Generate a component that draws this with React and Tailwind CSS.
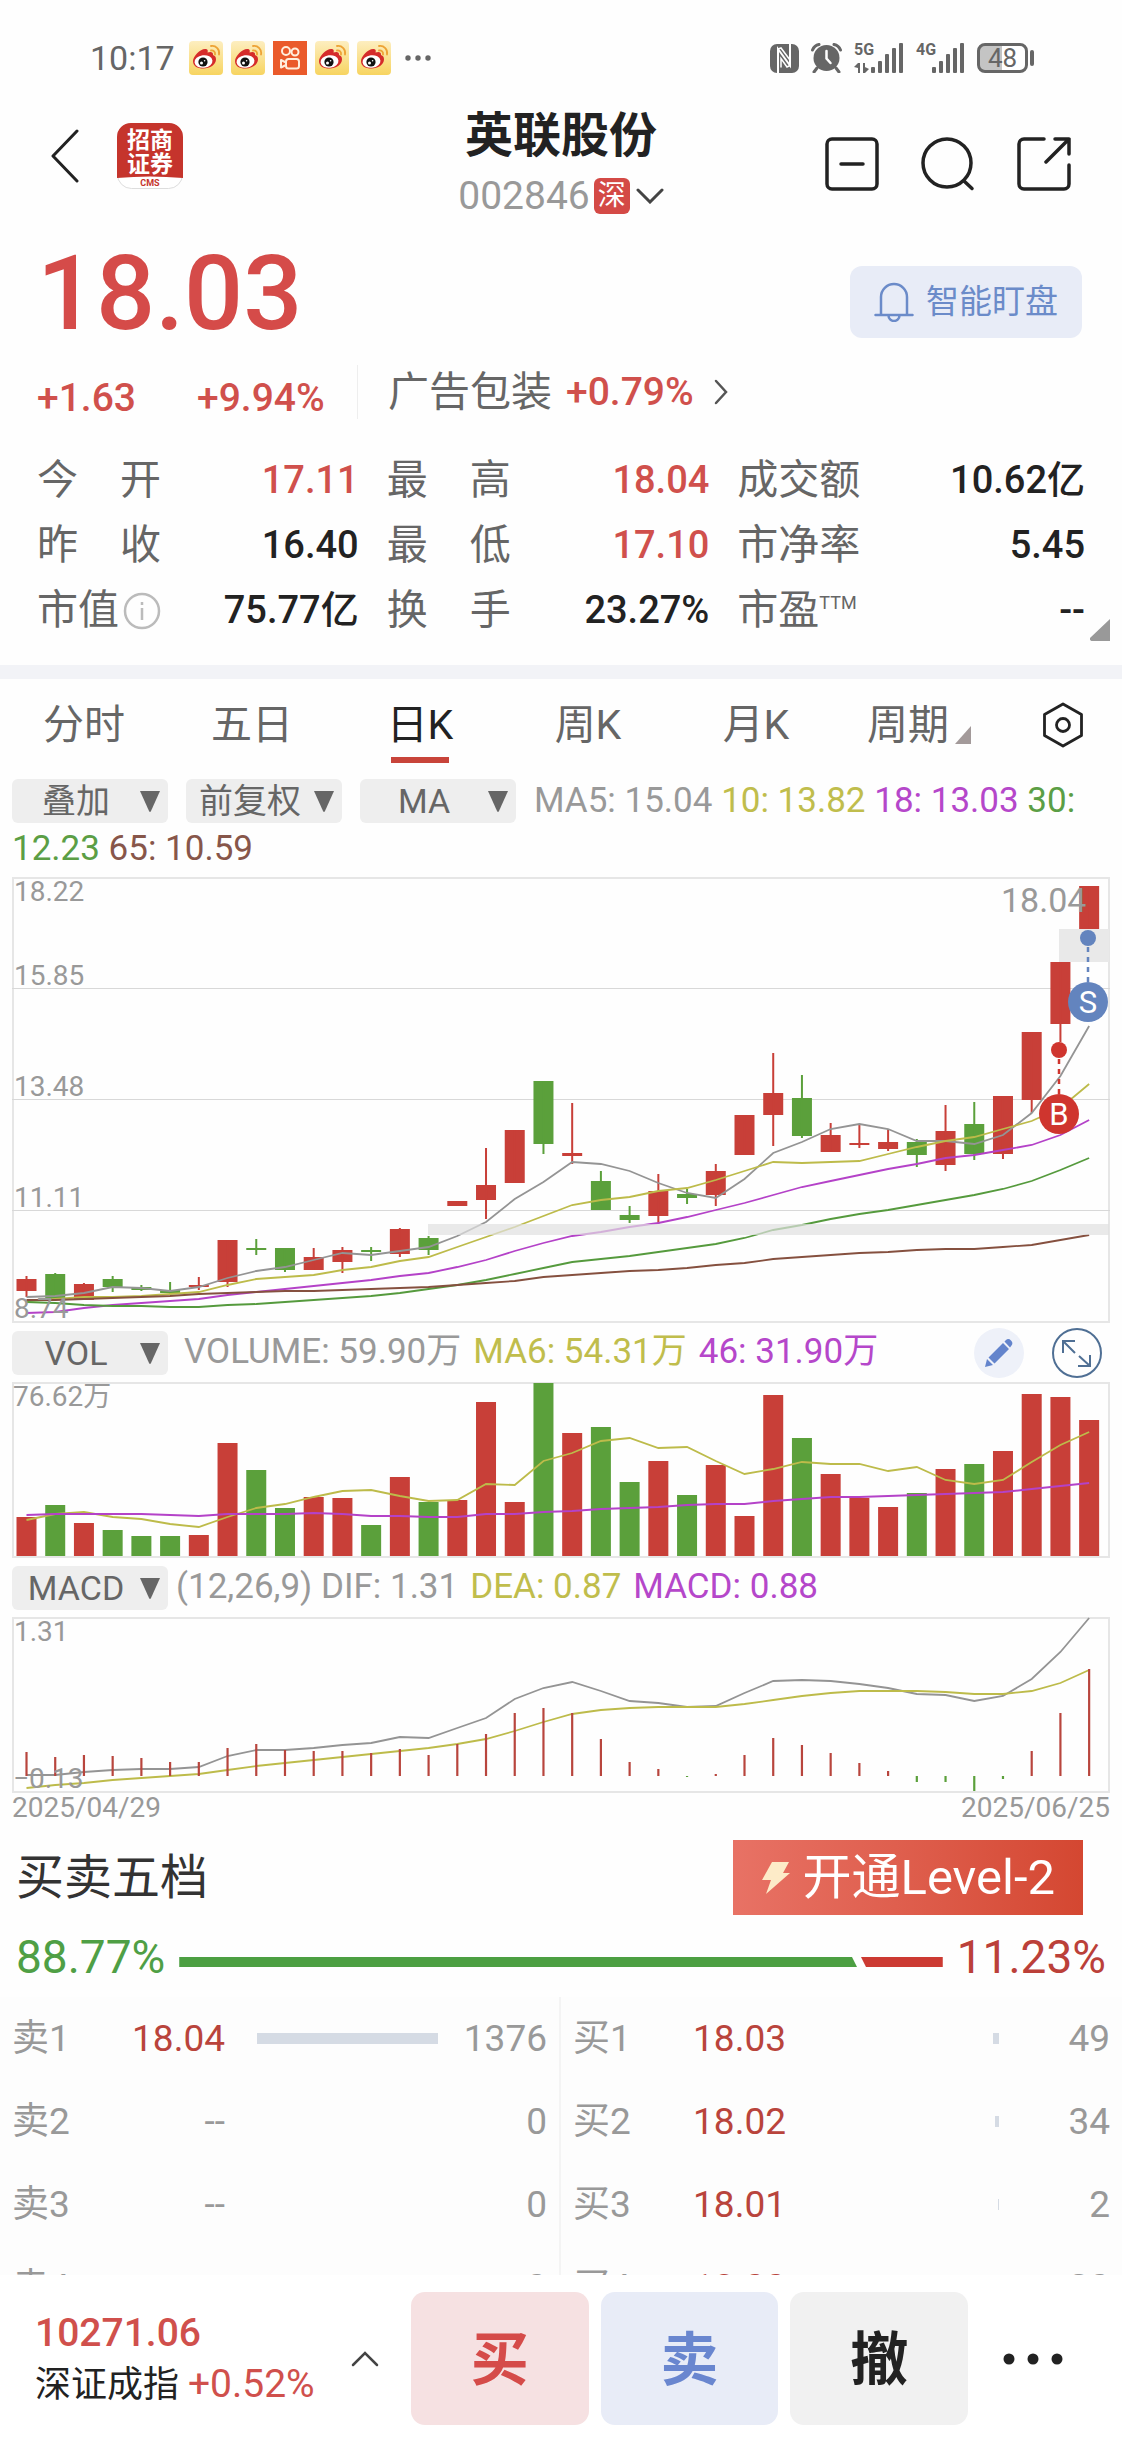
// src/App.jsx
import { useState } from 'react';

const RED = '#c83f38';
const GREEN = '#5ba03b';

// x of the n-th trading day, all three charts share it
const dayX = (i) => 14.5 + i * 28.72;
const toPoints = (ys) => ys.map((y, i) => `${dayX(i)},${y}`).join(' ');

// [up, body top, body bottom, high, low]
const CANDLES = [
  [1, 402, 414, 399, 420], [0, 397, 422, 396, 424], [1, 407, 423, 406, 423], [0, 402, 410, 399, 415],
  [0, 410, 413, 408, 414], [0, 413, 416, 405, 417], [1, 408, 410, 400, 413], [1, 363, 405, 363, 410],
  [0, 371, 373, 362, 378], [0, 371, 393, 371, 395], [1, 380, 393, 371, 393], [1, 373, 385, 370, 396],
  [0, 373, 375, 370, 384], [1, 352, 377, 351, 380], [0, 361, 373, 359, 378], [1, 324, 329, 324, 329],
  [1, 308, 323, 271, 342], [1, 253, 306, 253, 306], [0, 204, 267, 204, 277], [1, 276, 279, 226, 287],
  [0, 304, 333, 294, 333], [0, 338, 343, 329, 346], [1, 314, 339, 297, 347], [0, 317, 321, 312, 327],
  [1, 294, 318, 287, 329], [1, 238, 278, 238, 278], [1, 216, 238, 176, 269], [0, 221, 259, 198, 261],
  [1, 258, 275, 246, 275], [1, 266, 268, 247, 271], [1, 265, 272, 252, 274], [0, 265, 278, 262, 290],
  [1, 254, 288, 228, 294], [0, 247, 277, 225, 283], [1, 219, 277, 219, 282], [1, 155, 223, 155, 236],
  [1, 85, 147, 85, 165], [1, 9, 52, 9, 52],
];

const MA_LINES = [
  { color: '#949494', ys: [420, 419, 416, 410, 411, 414, 410, 401, 394, 390, 383, 376, 378, 374, 370, 359, 345, 322, 305, 285, 287, 294, 306, 316, 321, 302, 276, 265, 252, 247, 252, 264, 264, 267, 258, 236, 199, 149] },
  { color: '#bdbb4a', ys: [424, 422, 420, 420, 419, 417, 415, 408, 402, 400, 398, 393, 390, 384, 380, 370, 360, 350, 339, 328, 323, 320, 314, 311, 303, 294, 285, 286, 285, 284, 277, 270, 264, 260, 252, 244, 231, 207] },
  { color: '#b442c8', ys: [436, 435, 431, 428, 426, 424, 422, 418, 415, 412, 409, 406, 403, 399, 396, 390, 383, 374, 366, 359, 355, 350, 346, 340, 333, 326, 318, 310, 304, 298, 292, 287, 281, 278, 273, 268, 258, 243] },
  { color: '#559a3d', ys: [425, 426, 428, 429, 429, 430, 430, 428, 427, 425, 423, 421, 419, 416, 412, 408, 403, 397, 391, 385, 382, 379, 375, 371, 367, 361, 353, 348, 342, 337, 333, 328, 323, 318, 312, 304, 293, 281] },
  { color: '#85503f', ys: [423, 423, 422, 421, 420, 419, 417, 416, 415, 414, 414, 413, 412, 411, 410, 408, 406, 404, 400, 398, 396, 394, 393, 391, 388, 386, 382, 380, 378, 376, 375, 373, 372, 372, 370, 368, 363, 358] },
];

const VOLUMES = [135, 123, 141, 148, 154, 154, 153, 61, 88, 126, 115, 116, 143, 95, 120, 118, 20, 120, 1, 51, 45, 100, 79, 113, 83, 134, 13, 56, 92, 116, 125, 111, 87, 82, 69, 12, 15, 38];
const VOL_MA6 = [138, 132, 130, 135, 137, 142, 145, 135, 126, 122, 115, 109, 108, 114, 119, 118, 102, 103, 79, 71, 59, 56, 66, 65, 79, 92, 87, 80, 82, 82, 89, 85, 98, 102, 98, 80, 63, 50];
const VOL_MA46 = [133, 132, 132, 132, 132, 133, 134, 132, 132, 132, 131, 132, 134, 134, 135, 135, 132, 132, 130, 129, 127, 126, 125, 123, 122, 122, 119, 117, 115, 115, 114, 113, 112, 111, 110, 107, 104, 101];

const HIST = [135, 140, 138, 139, 141, 145, 145, 131, 127, 133, 134, 134, 136, 132, 138, 127, 117, 96, 91, 96, 122, 145, 152, 160, 157, 138, 121, 128, 136, 146, 154, 165, 165, 174, 162, 134, 96, 52];
const DIF = [158, 158, 155, 153, 152, 152, 150, 139, 133, 133, 131, 128, 126, 120, 121, 111, 101, 82, 71, 65, 74, 84, 86, 90, 89, 76, 64, 63, 64, 67, 71, 77, 78, 84, 79, 62, 35, 1];
const DEA = [171, 168, 166, 163, 161, 159, 157, 153, 149, 146, 143, 140, 137, 134, 131, 127, 122, 114, 105, 97, 93, 91, 90, 90, 90, 87, 83, 79, 76, 74, 74, 74, 75, 77, 77, 74, 66, 53];

const STATS = [
  { label: '今开', value: '17.11', up: true },
  { label: '最高', value: '18.04', up: true },
  { label: '成交额', value: '10.62亿' },
  { label: '昨收', value: '16.40' },
  { label: '最低', value: '17.10', up: true },
  { label: '市净率', value: '5.45' },
  { label: '市值', value: '75.77亿', info: true },
  { label: '换手', value: '23.27%' },
  { label: '市盈', sup: 'TTM', value: '--' },
];

const TABS = ['分时', '五日', '日K', '周K', '月K', '周期'];

// bar: width in px of the size bar
const ASKS = [
  { name: '卖1', price: '18.04', qty: '1376', bar: 181 },
  { name: '卖2', price: '--', qty: '0', bar: 0 },
  { name: '卖3', price: '--', qty: '0', bar: 0 },
  { name: '卖4', price: '--', qty: '0', bar: 0 },
];
const BIDS = [
  { name: '买1', price: '18.03', qty: '49', bar: 6 },
  { name: '买2', price: '18.02', qty: '34', bar: 4 },
  { name: '买3', price: '18.01', qty: '2', bar: 1 },
  { name: '买4', price: '18.00', qty: '20', bar: 0 },
];

function WeiboIcon() {
  return (
    <svg viewBox="0 0 34 34" className="size-[34px]" aria-hidden="true">
      <defs>
        <linearGradient id="weibo-bg" x1="0" y1="0" x2="0" y2="1">
          <stop offset="0" stopColor="#fdeec0" />
          <stop offset="1" stopColor="#f7d460" />
        </linearGradient>
      </defs>
      <rect width="34" height="34" rx="4" fill="url(#weibo-bg)" />
      <path d="M4 20c0-5 8-13 13-12 2 .4 2 2 1.500 3.500 3-1.200 6-.8 5.500 2.500 2 .8 3 2 3 4.500 0 5-6 9-12.500 9S4 25 4 20z" fill="#d52b2a" />
      <ellipse cx="14.500" cy="20.500" rx="9" ry="6.300" fill="#fff" transform="rotate(-7 14.500 20.500)" />
      <circle cx="14" cy="21" r="4.600" fill="#111" />
      <circle cx="12.500" cy="22" r="1.500" fill="#fff" />
      <circle cx="15.600" cy="19.800" r=".8" fill="#fff" />
      <path d="M22 9.500c2.500-.4 4.500 1.500 4 4M22 5c5-.8 9 3.500 8 8.500" fill="none" stroke="#eda336" strokeWidth="1.800" strokeLinecap="round" />
    </svg>
  );
}

function KuaishouIcon() {
  return (
    <svg viewBox="0 0 34 34" className="size-[34px]" fill="none" stroke="#ffeedd" strokeWidth="2" aria-hidden="true">
      <rect width="34" height="34" fill="#ea5a2b" stroke="none" />
      <circle cx="13" cy="10" r="4" />
      <circle cx="22" cy="11" r="3.500" />
      <rect x="13" y="18" width="13" height="9.500" rx="2.500" />
      <path d="M13 21.500l-5-2.500v7.500l5-2.500" strokeLinejoin="round" />
    </svg>
  );
}

function SignalIcon() {
  return (
    <svg viewBox="0 0 33 32" className="h-8 w-[33px]" fill="#666" aria-hidden="true">
      <rect x="0" y="25" width="4" height="6" rx="1" />
      <rect x="7" y="19" width="4" height="12" rx="1" />
      <rect x="14" y="12" width="4" height="19" rx="1" />
      <rect x="21" y="6" width="4" height="25" rx="1" />
      <rect x="28" y="1" width="4" height="30" rx="1" />
    </svg>
  );
}

function StatusBar() {
  return (
    <div className="flex h-9 items-center justify-between pr-[88px] pl-[90px] text-[34px] leading-9 text-[#666]">
      <div className="flex items-center gap-2">
        <span className="mr-1.5">10:17</span>
        <WeiboIcon />
        <WeiboIcon />
        <KuaishouIcon />
        <WeiboIcon />
        <WeiboIcon />
        <svg viewBox="0 0 26 6" className="ml-1.5 h-1.5 w-[26px]" fill="#666" aria-hidden="true">
          <circle cx="3" cy="3" r="2.700" />
          <circle cx="13" cy="3" r="2.700" />
          <circle cx="23" cy="3" r="2.700" />
        </svg>
      </div>

      <div className="flex items-center gap-3">
        {/* NFC */}
        <svg viewBox="0 0 29 29" className="size-[29px]" aria-hidden="true">
          <rect width="29" height="29" rx="7" fill="#666" />
          <path d="M8 29V5l12 16.500V0" fill="none" stroke="#fff" strokeWidth="2" />
          <path d="M8 5l3-1 9 12M20 21.500l-3 1.500-6-8.500v9" fill="none" stroke="#fff" strokeWidth="1.500" />
        </svg>
        {/* alarm */}
        <svg viewBox="0 0 31 30" className="h-[30px] w-[31px]" aria-hidden="true">
          <circle cx="15.500" cy="15" r="13" fill="#666" />
          <path d="M1.500 7A9 9 0 0 1 8 1.500M29.500 7A9 9 0 0 0 23 1.500M6 25l-3 4M25 25l3 4" stroke="#666" strokeWidth="3" strokeLinecap="round" fill="none" />
          <path d="M15.500 8v7.500l4 4.500" stroke="#fff" strokeWidth="2.500" strokeLinecap="round" fill="none" />
        </svg>
        <div className="flex">
          <div className="flex w-[17px] flex-col text-[16px] leading-4 font-bold">
            <span>5G</span>
            <svg viewBox="0 0 15 12" className="mt-1 h-3 w-[15px]" fill="#666" aria-hidden="true">
              <path d="M4 1h2v10H4zM0 5l4-4v5zM9 1h2v10H9zM11 5l4 2-4 4z" />
            </svg>
          </div>
          <SignalIcon />
        </div>
        <div className="flex">
          <span className="w-4 text-[16px] leading-4 font-bold">4G</span>
          <SignalIcon />
        </div>
        <div className="flex items-center gap-0.5">
          <span className="flex h-[30px] w-[51px] items-center justify-center rounded-lg border-3 border-[#666] bg-linear-to-r from-[#c4c4c4] from-48% to-white to-48% text-[26px] leading-6">
            48
          </span>
          <span className="h-4 w-1 rounded-sm bg-[#666]" />
        </div>
      </div>
    </div>
  );
}

function BrokerLogo() {
  return (
    <svg viewBox="0 0 66 66" className="size-[66px]" role="img" aria-label="招商证券">
      <rect x=".5" y=".5" width="65" height="65" rx="14" fill="#fff" stroke="#ddd" />
      <path d="M0 55V14A14 14 0 0 1 14 0h38a14 14 0 0 1 14 14v41q-33-3-66 0z" fill="#c5342c" />
      <g textAnchor="middle" fontWeight="700">
        <g fill="#fff" fontSize="23">
          <text x="33" y="25">招商</text>
          <text x="33" y="49">证券</text>
        </g>
        <text x="33" y="63" fill="#c5342c" fontSize="9">CMS</text>
      </g>
    </svg>
  );
}

function Header() {
  return (
    <header className="mt-[34px] grid grid-cols-[1fr_auto_1fr] items-center">
      <div className="flex items-center gap-[38px] pb-3 pl-[51px]">
        <button type="button" aria-label="返回">
          <svg viewBox="0 0 28 54" className="h-[54px] w-7" fill="none" stroke="#222" strokeWidth="3" strokeLinecap="round" strokeLinejoin="round">
            <path d="M26 2L2 27l24 25" />
          </svg>
        </button>
        <BrokerLogo />
      </div>

      <div className="flex flex-col items-center gap-4">
        <h1 className="text-[48px] leading-[52px] font-bold text-[#222]">英联股份</h1>
        <button type="button" className="flex items-center text-[39px] leading-9 text-[#999]">
          002846
          <span className="ml-1 flex size-9 items-center justify-center rounded-md bg-[#d44a46] text-[28px] leading-9 text-white">深</span>
          <svg viewBox="0 0 28 16" className="ml-1.5 h-4 w-7" fill="none" stroke="#444" strokeWidth="3" strokeLinecap="round">
            <path d="M2 2l12 12L26 2" />
          </svg>
        </button>
      </div>

      <div className="flex justify-end gap-[42px] pt-1 pr-[51px]">
        <button type="button" aria-label="移除自选">
          <svg viewBox="0 0 54 54" className="size-[54px]" fill="none" stroke="#222" strokeWidth="3.500" strokeLinecap="round">
            <rect x="2" y="2" width="50" height="50" rx="5" />
            <path d="M16 27h22" />
          </svg>
        </button>
        <button type="button" aria-label="搜索">
          <svg viewBox="0 0 54 54" className="size-[54px]" fill="none" stroke="#222" strokeWidth="3.500" strokeLinecap="round">
            <circle cx="26" cy="26" r="24" />
            <path d="M43 44l8 7.500" />
          </svg>
        </button>
        <button type="button" aria-label="分享">
          <svg viewBox="0 0 54 54" className="size-[54px]" fill="none" stroke="#222" strokeWidth="3.500" strokeLinecap="round" strokeLinejoin="round">
            <path d="M27 2H7a5 5 0 0 0-5 5v40a5 5 0 0 0 5 5h40a5 5 0 0 0 5-5V28" />
            <path d="M38 2h14v15M52 2L29 25" />
          </svg>
        </button>
      </div>
    </header>
  );
}

function PriceSummary() {
  return (
    <section>
      <div className="mt-9 flex items-end justify-between pr-10 pl-[37px]">
        <span className="text-[104px] leading-[88px] font-medium text-[#d54b49]">18.03</span>
        <button type="button" className="flex h-[72px] items-center rounded-xl bg-[#e8ecf7] px-6 text-[33px] text-[#6b8bc9]">
          <svg viewBox="0 0 40 40" className="mr-3 size-10" fill="none" stroke="#6b8bc9" strokeWidth="2.500" strokeLinecap="round">
            <path d="M7 33V15a13 13 0 0 1 26 0v18M1.500 33h37M14.500 33.500a5.500 5.500 0 0 0 11 0" />
          </svg>
          智能盯盘
        </button>
      </div>

      <div className="mt-[27px] flex h-[54px] items-center text-[39px] leading-[54px] font-medium text-[#d0504c]">
        <div className="flex w-[357px] pt-3 pl-[37px]">
          <span className="w-40">+1.63</span>
          <span>+9.94%</span>
        </div>
        <a href="#sector" className="flex items-center border-l border-[#eee] pl-[30px]">
          <span className="mr-3.5 text-[41px] font-normal text-[#666]">广告包装</span>
          +0.79%
          <svg viewBox="0 0 14 26" className="ml-5 h-[26px] w-3.5" fill="none" stroke="#555" strokeWidth="2.500" strokeLinecap="round">
            <path d="M2 2l10 11L2 24" />
          </svg>
        </a>
      </div>

      <dl className="mt-[29px] grid grid-cols-[322fr_323fr_348fr] gap-x-7 px-[37px]">
        {STATS.map((s) => (
          <div key={s.label} className="flex h-[65px] items-center justify-between leading-[65px]">
            <dt className="flex min-w-[124px] justify-between text-[41px] text-[#666]">
              {s.label.length === 2 && !s.info && !s.sup
                ? [...s.label].map((ch) => <span key={ch}>{ch}</span>)
                : <span>{s.label}</span>}
              {s.info && (
                <svg viewBox="0 0 38 38" className="mt-[14px] size-[38px]" fill="none" stroke="#bbb" strokeWidth="2.500">
                  <circle cx="19" cy="19" r="17" />
                  <path d="M19 16v12M19 10v3" />
                </svg>
              )}
              {s.sup && <span className="-mt-2 grow text-[18px]">{s.sup}</span>}
            </dt>
            <dd className={`text-[38px] font-medium ${s.up ? 'text-[#d0504c]' : 'text-[#222]'}`}>{s.value}</dd>
          </div>
        ))}
      </dl>
      <div className="flex h-[22px] justify-end pr-3">
        <svg viewBox="0 0 20 22" className="-mt-6 h-[22px] w-5" fill="#999" aria-hidden="true">
          <path d="M20 0v22H2a2 2 0 0 1-1.500-3.500z" />
        </svg>
      </div>
    </section>
  );
}

function PeriodTabs() {
  const [active, setActive] = useState('日K');

  return (
    <nav className="flex h-[92px] text-[41px] text-[#666]">
      {TABS.map((tab) => (
        <button key={tab} type="button" onClick={() => setActive(tab)} className="flex flex-[168] flex-col items-center pt-3.5 leading-[64px]">
          <span className={`flex items-center ${tab === active ? 'text-[#222]' : ''}`}>
            {tab}
            {tab === '周期' && (
              <svg viewBox="0 0 16 18" className="mt-5 mr-2.5 ml-1.5 h-[18px] w-4" fill="#a39a9a">
                <path d="M16 0v18H0z" />
              </svg>
            )}
          </span>
          {tab === active && <span className="h-1.5 w-[58px] bg-[#c8443a]" />}
        </button>
      ))}
      <button type="button" aria-label="设置" className="flex flex-[114] items-center">
        <svg viewBox="0 0 42 46" className="ml-[34px] h-[46px] w-[42px]" fill="none" stroke="#222" strokeWidth="2.800" strokeLinejoin="round">
          <path d="M21 2l18.500 10.500v21L21 44 2.500 33.500v-21z" />
          <circle cx="21" cy="23" r="6.500" />
        </svg>
      </button>
    </nav>
  );
}

function IndicatorSelect({ label, value }) {
  return (
    <span className="relative my-0.5 inline-block h-11 w-[156px] align-top">
      <select aria-label={label} className="block h-11 w-full appearance-none rounded-md bg-[#eee] pr-7 text-center text-[34px] leading-11 text-[#666]">
        <option>{value}</option>
      </select>
      <svg viewBox="0 0 20 21" className="pointer-events-none absolute top-3 right-2 h-[21px] w-5" fill="#666" aria-hidden="true">
        <path d="M0 0h20L11 20q-1 2-2 0z" />
      </svg>
    </span>
  );
}

function CandleChart() {
  return (
    <svg viewBox="0 0 1098 446" className="block w-full overflow-visible" role="img" aria-label="日K线">
      <rect x="1" y="1" width="1096" height="444" fill="none" stroke="#e6e6e6" strokeWidth="2" />
      {[111.5, 222.5, 333.5].map((y) => (
        <line key={y} x1="0" x2="1098" y1={y} y2={y} stroke="#d8d8d8" />
      ))}
      {CANDLES.map(([up, top, bottom, high, low], i) => (
        <g key={i} fill={up ? RED : GREEN}>
          <rect x={dayX(i) - 10} y={top} width="20" height={bottom - top} />
          <rect x={dayX(i) - 1} y={high} width="2" height={low - high} />
        </g>
      ))}
      {MA_LINES.map((line) => (
        <polyline key={line.color} points={toPoints(line.ys)} fill="none" stroke={line.color} strokeWidth="1.800" />
      ))}

      {/* open price gaps */}
      <rect x="416" y="347" width="681" height="11" fill="#dfdfdf" opacity=".7" />
      <path d="M1047 52h50v33h-50z" fill="#e9e9e9" />

      <g fill="#999" fontSize="28">
        <text x="2" y="24">18.22</text>
        <text x="2" y="108">15.85</text>
        <text x="2" y="219">13.48</text>
        <text x="2" y="330">11.11</text>
        <text x="2" y="441">8.74</text>
        <text x="989" y="35" fontSize="34">18.04</text>
      </g>

      {/* trade marks */}
      <g fill="#cf352e">
        <circle cx="1047" cy="173" r="8" />
        <line x1="1047" x2="1047" y1="182" y2="217" stroke="#cf352e" strokeWidth="2.500" strokeDasharray="5 5" />
        <circle cx="1047" cy="237" r="20" />
      </g>
      <g fill="#6384be">
        <circle cx="1076" cy="61" r="8" />
        <line x1="1076" x2="1076" y1="70" y2="106" stroke="#6384be" strokeWidth="2.500" strokeDasharray="5 5" />
        <circle cx="1076" cy="125" r="20" />
      </g>
      <g fill="#fff" fontSize="31" textAnchor="middle">
        <text x="1047" y="248">B</text>
        <text x="1076" y="136">S</text>
      </g>
    </svg>
  );
}

function VolumeChart() {
  return (
    <svg viewBox="0 0 1098 176" className="block w-full overflow-visible" role="img" aria-label="成交量">
      <rect x="1" y="1" width="1096" height="174" fill="none" stroke="#e6e6e6" strokeWidth="2" />
      {VOLUMES.map((y, i) => (
        <rect key={i} x={dayX(i) - 10} y={y} width="20" height={174 - y} fill={CANDLES[i][0] ? RED : GREEN} />
      ))}
      <polyline points={toPoints(VOL_MA6)} fill="none" stroke="#bdbb4a" strokeWidth="1.800" />
      <polyline points={toPoints(VOL_MA46)} fill="none" stroke="#b442c8" strokeWidth="2" />
      <text x="1" y="24" fill="#999" fontSize="28">76.62万</text>
    </svg>
  );
}

function MacdChart() {
  return (
    <svg viewBox="0 0 1098 176" className="block w-full overflow-visible" role="img" aria-label="MACD">
      <rect x="1" y="1" width="1096" height="174" fill="none" stroke="#e6e6e6" strokeWidth="2" />
      <polyline points={toPoints(DIF)} fill="none" stroke="#949494" strokeWidth="1.800" />
      <polyline points={toPoints(DEA)} fill="none" stroke="#bdbb4a" strokeWidth="1.800" />
      {HIST.map((y, i) => (
        <line key={i} x1={dayX(i)} x2={dayX(i)} y1="159" y2={y} stroke={y > 159 ? GREEN : '#b8453d'} strokeWidth="2.200" />
      ))}
      <g fill="#999" fontSize="28">
        <text x="2" y="24">1.31</text>
        <text x="1" y="171">−0.13</text>
      </g>
    </svg>
  );
}

function ChartPanel() {
  return (
    <section className="px-3 pt-1.5">
      <p className="pb-1 text-[35px] leading-[48px]">
        <span className="mr-[18px] inline-flex gap-[18px] align-top">
          <IndicatorSelect label="叠加" value="叠加" />
          <IndicatorSelect label="复权" value="前复权" />
          <IndicatorSelect label="主图指标" value="MA" />
        </span>
        <span className="text-[#999]">MA5: 15.04</span>{' '}
        <span className="text-[#c0bd4c]">10: 13.82</span>{' '}
        <span className="text-[#b547ca]">18: 13.03</span>{' '}
        <span className="text-[#5b9e45]">30: 12.23</span>{' '}
        <span className="text-[#87564a]">65: 10.59</span>
      </p>
      <CandleChart />

      <div className="flex h-[59px] items-center pr-2 text-[35px]">
        <IndicatorSelect label="副图指标一" value="VOL" />
        <p className="ml-4 flex grow gap-3">
          <span className="text-[#999]">VOLUME: 59.90万</span>
          <span className="text-[#c0bd4c]">MA6: 54.31万</span>
          <span className="text-[#b547ca]">46: 31.90万</span>
        </p>
        <button type="button" aria-label="画线" className="mr-7 flex size-[50px] items-center justify-center rounded-full bg-[#eef1f9]">
          <svg viewBox="0 0 30 30" className="size-[30px]" fill="#6384cc">
            <path d="M1 29l2-8 6 6zM4.500 19.500L19 5l6 6L10.500 25.500zM20.500 3.500l1.500-1.500q2.500-2 5 .5t.5 5L26 9.500z" />
          </svg>
        </button>
        <button type="button" aria-label="全屏">
          <svg viewBox="0 0 50 50" className="size-[50px]" fill="none" stroke="#4f6f94" strokeWidth="2">
            <circle cx="25" cy="25" r="24" />
            <path d="M23 13H11v12M11 13l12 12M26 38h12V27M38 38L27 28" />
          </svg>
        </button>
      </div>
      <VolumeChart />

      <div className="flex h-[59px] items-center text-[35px]">
        <IndicatorSelect label="副图指标二" value="MACD" />
        <p className="ml-2 flex gap-3">
          <span className="text-[#999]">(12,26,9) DIF: 1.31</span>
          <span className="text-[#c0bd4c]">DEA: 0.87</span>
          <span className="text-[#b547ca]">MACD: 0.88</span>
        </p>
      </div>
      <MacdChart />

      <div className="flex justify-between text-[28px] leading-[30px] text-[#999]">
        <time>2025/04/29</time>
        <time>2025/06/25</time>
      </div>
    </section>
  );
}

function QuoteTable({ title, rows }) {
  return (
    <table aria-label={title} className="w-full table-fixed text-[37px] text-[#999]">
      <tbody>
        {rows.map((row) => (
          <tr key={row.name} className="h-[83px]">
            <th scope="row" className="w-[100px] pl-3 text-left font-normal">{row.name}</th>
            <td className={`w-[125px] text-right ${row.price === '--' ? '' : 'text-[#b9443c]'}`}>{row.price}</td>
            <td className="w-[213px]">
              <div className="ml-auto h-[11px] bg-[#d5dbe4]" style={{ width: row.bar }} />
            </td>
            <td className="pr-3 text-right">{row.qty}</td>
          </tr>
        ))}
      </tbody>
    </table>
  );
}

function OrderBook() {
  return (
    <section className="pt-[17px]">
      <div className="flex items-center justify-between pr-[39px] pl-4">
        <h2 className="text-[48px] leading-[60px] text-[#333]">买卖五档</h2>
        <button type="button" className="flex h-[75px] items-center bg-linear-to-r from-[#e87265] to-[#d44731] px-7 text-[49px] leading-[75px] text-white">
          <svg viewBox="0 0 30 34" className="mr-3 h-[34px] w-[30px]" fill="#fdebc8" aria-hidden="true">
            <path d="M11 1h17l-6 11h7L5 33l5-14H1z" />
          </svg>
          开通Level-2
        </button>
      </div>

      <div className="mt-[17px] flex h-[50px] items-center justify-between px-4 text-[46px] leading-[50px]">
        <span className="text-[#4f9f45]">88.77%</span>
        <div className="mx-3.5 mt-2.5 flex h-2.5 grow">
          <div className="bg-[#4c9f42] [clip-path:polygon(0_0,calc(100%-5px)_0,100%_100%,0_100%)]" style={{ flexGrow: 88.77 }} />
          <div className="bg-[#cc3a32] [clip-path:polygon(4px_0,100%_0,100%_100%,9px_100%)]" style={{ flexGrow: 11.23 }} />
        </div>
        <span className="text-[#bb4039]">11.23%</span>
      </div>

      {/* the list goes on under the trade bar */}
      <div className="mt-[15px] grid h-[278px] grid-cols-2 items-start overflow-hidden bg-[#fdfdfd]">
        <div className="border-r-2 border-[#f4f4f4]">
          <QuoteTable title="卖盘" rows={ASKS} />
        </div>
        <QuoteTable title="买盘" rows={BIDS} />
      </div>
    </section>
  );
}

function TradeBar() {
  return (
    <footer className="flex gap-3 bg-white py-[17px]">
      <button type="button" className="flex w-[399px] items-center justify-between pr-5 pl-[35px] text-left">
        <span className="flex flex-col whitespace-nowrap">
          <span className="text-[39px] leading-[52px] font-medium text-[#d0504c]">10271.06</span>
          <span className="text-[36px] leading-[50px] text-[#222]">
            深证成指 <span className="text-[39px] text-[#d0504c]">+0.52%</span>
          </span>
        </span>
        <svg viewBox="0 0 28 16" className="h-4 w-7 shrink-0" fill="none" stroke="#444" strokeWidth="2.500" strokeLinecap="round">
          <path d="M2 14L14 2l12 12" />
        </svg>
      </button>
      <button type="button" className="h-[133px] flex-1 rounded-[14px] bg-[#f6e1e2] pt-1 text-[58px] font-bold text-[#d54b49]">买</button>
      <button type="button" className="h-[133px] flex-1 rounded-[14px] bg-[#e8ecf7] pt-1 text-[58px] font-bold text-[#6986cf]">卖</button>
      <button type="button" className="h-[133px] flex-1 rounded-[14px] bg-[#f1f1f1] pt-1 text-[58px] font-bold text-[#222]">撤</button>
      <button type="button" aria-label="更多" className="w-[142px] pl-[22px]">
        <svg viewBox="0 0 62 12" className="h-3 w-[62px]" fill="#222">
          <circle cx="7" cy="6" r="5.500" />
          <circle cx="31" cy="6" r="5.500" />
          <circle cx="55" cy="6" r="5.500" />
        </svg>
      </button>
    </footer>
  );
}

export default function App() {
  return (
    <div className="bg-[#fefefe] pt-10 font-['Roboto','Noto_Sans_CJK_SC',sans-serif]">
      <StatusBar />
      <Header />
      <PriceSummary />
      <div className="h-3.5 bg-[#f2f3f7]" />
      <PeriodTabs />
      <ChartPanel />
      <OrderBook />
      <TradeBar />
    </div>
  );
}
